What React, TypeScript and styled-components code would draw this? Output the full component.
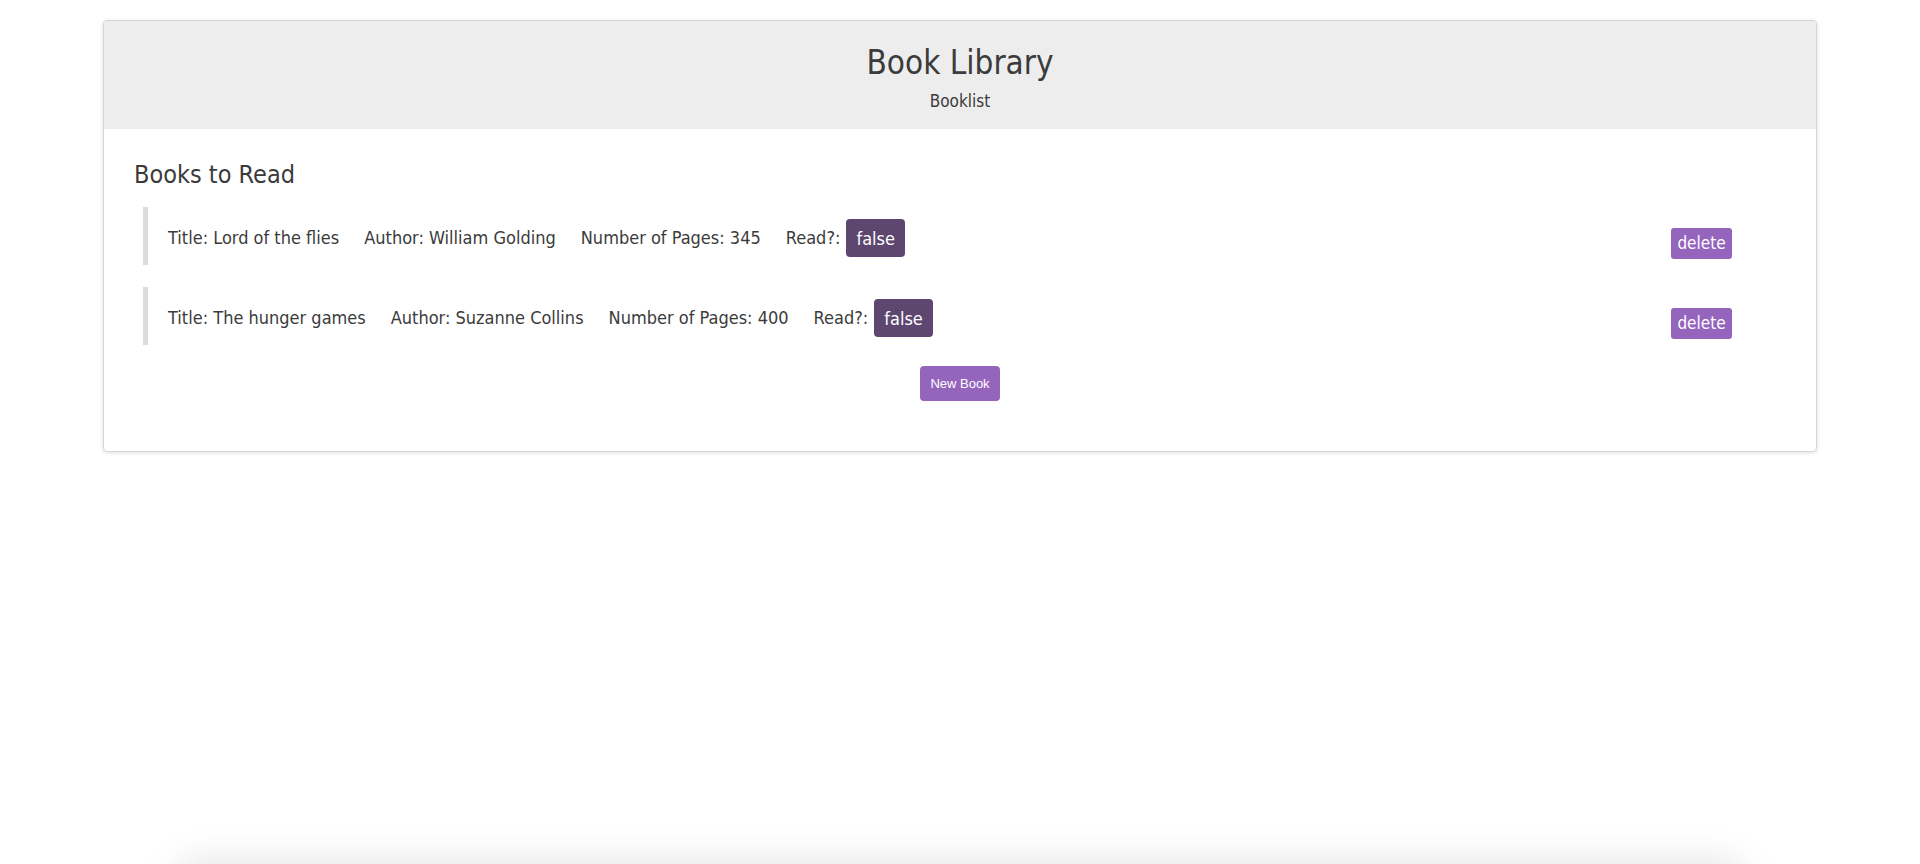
import React from "react";
import styled, { createGlobalStyle } from "styled-components";

const Global = createGlobalStyle`
  html, body { margin: 0; padding: 0; background: #fff; overflow: hidden; }
  body {
    font-family: "DejaVu Sans Condensed", "DejaVu Sans", sans-serif;
    font-stretch: condensed;
    color: #3b3b3b;
  }
`;

const Page = styled.div`
  height: 864px;
  padding-top: 20px;
  box-sizing: border-box;
  display: flex;
  flex-direction: column;
  align-items: center;
  overflow: hidden;
`;

const Card = styled.section`
  flex-shrink: 0;
  width: 1714px;
  box-sizing: border-box;
  border: 1px solid #d6d6d6;
  border-radius: 4px;
  box-shadow: 0 1px 4px rgba(0, 0, 0, 0.12);
  overflow: hidden;
  background: #fff;
`;

const Header = styled.header`
  background: #ededed;
  height: 108px;
  box-sizing: border-box;
  padding-top: 22px;
  text-align: center;
`;

const Title = styled.h1`
  margin: 0;
  font-size: 33px;
  font-weight: normal;
  line-height: 40px;
`;

const Subtitle = styled.div`
  margin-top: 8px;
  font-size: 17px;
  line-height: 20px;
`;

const Body = styled.div`
  padding: 31px 30px 50px 30px;
`;

const SectionTitle = styled.h2`
  margin: 0 0 17px 0;
  font-size: 25px;
  font-weight: normal;
  line-height: 30px;
`;

const List = styled.div`
  display: flex;
  flex-direction: column;
  gap: 22px;
  margin-left: 9px;
  margin-right: 54px;
`;

const Row = styled.div`
  display: flex;
  align-items: center;
  border-left: 5px solid #dcdcdc;
  padding: 10px 0 10px 20px;
  height: 58px;
  box-sizing: border-box;
  font-size: 18px;
  line-height: 22px;
`;

const Field = styled.span`
  margin-right: 25px;
  padding-top: 4px;
  white-space: nowrap;
`;

const ReadLabel = styled.span`
  margin-right: 6px;
  padding-top: 4px;
`;

const Badge = styled.span`
  display: inline-flex;
  align-items: center;
  justify-content: center;
  height: 38px;
  margin-top: 4px;
  padding: 2px 10px 0;
  box-sizing: border-box;
  border-radius: 4px;
  background: #5d4670;
  color: #fff;
  font-size: 18px;
`;

const DeleteButton = styled.button`
  margin-left: auto;
  margin-top: 14px;
  height: 31px;
  width: 61px;
  padding: 0;
  border: none;
  border-radius: 3px;
  background: #9565be;
  color: #fff;
  font-family: inherit;
  font-stretch: condensed;
  font-size: 17px;
`;

const Actions = styled.div`
  display: flex;
  justify-content: center;
  margin-top: 21px;
`;

const NewButton = styled.button`
  width: 80px;
  height: 35px;
  border: none;
  border-radius: 4px;
  background: #9565be;
  color: #fff;
  font-family: "Liberation Sans", Arial, sans-serif;
  font-size: 13px;
  padding: 0;
`;

const Footer = styled.div`
  margin-top: 414px;
  width: 1560px;
  height: 60px;
  flex-shrink: 0;
  background: #fff;
  box-shadow: 0 0 40px rgba(0, 0, 0, 0.14);
`;

const books = [
  { title: "Lord of the flies", author: "William Golding", pages: 345, read: false },
  { title: "The hunger games", author: "Suzanne Collins", pages: 400, read: false },
];

export default function App() {
  return (
    <>
      <Global />
      <Page>
        <Card>
          <Header>
            <Title>Book Library</Title>
            <Subtitle>Booklist</Subtitle>
          </Header>
          <Body>
            <SectionTitle>Books to Read</SectionTitle>
            <List>
              {books.map((b) => (
                <Row key={b.title}>
                  <Field>Title: {b.title}</Field>
                  <Field>Author: {b.author}</Field>
                  <Field>Number of Pages: {b.pages}</Field>
                  <ReadLabel>Read?:</ReadLabel>
                  <Badge>{String(b.read)}</Badge>
                  <DeleteButton>delete</DeleteButton>
                </Row>
              ))}
            </List>
            <Actions>
              <NewButton>New Book</NewButton>
            </Actions>
          </Body>
        </Card>
        <Footer />
      </Page>
    </>
  );
}
